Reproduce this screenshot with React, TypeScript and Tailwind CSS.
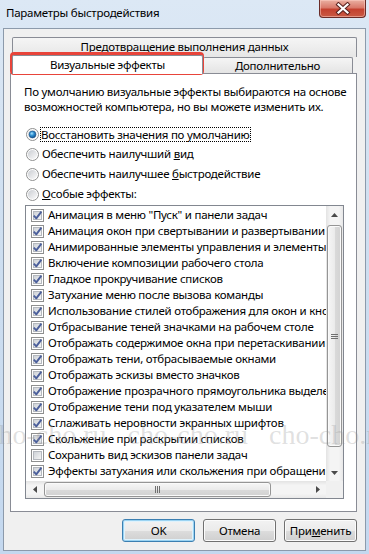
import React from "react";

const items: [string, boolean][] = [
  ['Анимация в меню "Пуск" и панели задач', true],
  ["Анимация окон при свертывании и развертывании", true],
  ["Анимированные элементы управления и элементы внутри окна", true],
  ["Включение композиции рабочего стола", true],
  ["Гладкое прокручивание списков", true],
  ["Затухание меню после вызова команды", true],
  ["Использование стилей отображения для окон и кнопок", true],
  ["Отбрасывание теней значками на рабочем столе", true],
  ["Отображать содержимое окна при перетаскивании", true],
  ["Отображать тени, отбрасываемые окнами", true],
  ["Отображать эскизы вместо значков", true],
  ["Отображение прозрачного прямоугольника выделения", true],
  ["Отображение тени под указателем мыши", true],
  ["Сглаживать неровности экранных шрифтов", true],
  ["Скольжение при раскрытии списков", true],
  ["Сохранить вид эскизов панели задач", false],
  ["Эффекты затухания или скольжения при обращении к меню", true],
];

function Defs() {
  return (
    <svg width="0" height="0" className="absolute">
      <defs>
        <linearGradient id="cbIn" x1="0" y1="0" x2="1" y2="1">
          <stop offset="0" stopColor="#cbcfd5" />
          <stop offset="1" stopColor="#f7f7f7" />
        </linearGradient>
        <linearGradient id="rdIn" x1="0" y1="0" x2="1" y2="1">
          <stop offset="0" stopColor="#c9ccd1" />
          <stop offset="1" stopColor="#fbfbfb" />
        </linearGradient>
        <radialGradient id="rdDot" cx="0.4" cy="0.35" r="0.7">
          <stop offset="0" stopColor="#a8e4ff" />
          <stop offset="0.45" stopColor="#2f8fd0" />
          <stop offset="1" stopColor="#0c4a86" />
        </radialGradient>
      </defs>
    </svg>
  );
}

function CheckBox({ checked }: { checked: boolean }) {
  return (
    <svg width="13" height="13" viewBox="0 0 13 13" className="shrink-0">
      <rect x="0.5" y="0.5" width="12" height="12" fill="#ffffff" stroke="#8e8f8f" />
      <rect x="2.5" y="2.5" width="8" height="8" fill="url(#cbIn)" stroke="#b4b8be" />
      {checked && (
        <path
          d="M2.8 6.6 L5.3 9.3 L10.4 2.6"
          fill="none"
          stroke="#4b5f9b"
          strokeWidth="1.9"
          strokeLinejoin="round"
        />
      )}
    </svg>
  );
}

function Radio({ checked }: { checked: boolean }) {
  return (
    <svg width="13" height="13" viewBox="0 0 13 13" className="shrink-0">
      <circle cx="6.5" cy="6.5" r="6" fill="#ffffff" stroke="#8e8f8f" />
      <circle cx="6.5" cy="6.5" r="4.6" fill="url(#rdIn)" />
      {checked && <circle cx="6.5" cy="6.5" r="3.4" fill="url(#rdDot)" stroke="#1a5289" strokeWidth="0.6" />}
    </svg>
  );
}

function Tri({ dir }: { dir: "up" | "down" | "left" | "right" }) {
  const p =
    dir === "up"
      ? "M0 4 L3.5 0 L7 4 Z"
      : dir === "down"
      ? "M0 0 L7 0 L3.5 4 Z"
      : dir === "left"
      ? "M4 0 L4 7 L0 3.5 Z"
      : "M0 0 L4 3.5 L0 7 Z";
  const w = dir === "up" || dir === "down" ? 7 : 4;
  const h = dir === "up" || dir === "down" ? 4 : 7;
  return (
    <svg width={w} height={h} viewBox={`0 0 ${w} ${h}`}>
      <path d={p} fill="#4a4a4a" />
    </svg>
  );
}

function Btn({ label, def }: { label: React.ReactNode; def?: boolean }) {
  return (
    <div
      className={
        "flex h-[23px] w-[73px] items-center justify-center rounded-[3px] border leading-[14px] " +
        (def
          ? "border-[#3c7fb1] bg-[linear-gradient(to_bottom,#f2f2f2_0%,#ebebeb_50%,#dddddd_51%,#cfcfcf_100%)] shadow-[inset_0_0_0_1px_#9ad3f2,inset_0_0_0_2px_#dff2fc]"
          : "border-[#707070] bg-[linear-gradient(to_bottom,#f2f2f2_0%,#ebebeb_50%,#dddddd_51%,#cfcfcf_100%)] shadow-[inset_0_0_0_1px_#fbfbfb]")
      }
    >
      {label}
    </div>
  );
}

export default function App() {
  return (
    <div className="relative h-[554px] w-[369px] overflow-hidden bg-[linear-gradient(to_bottom,#dce8f5,#cfdff0_40%,#c4d8ef)] font-['Noto_Sans',sans-serif] text-[11.5px] tracking-[-0.25px] text-black">
      <Defs />
      {/* title bar */}
      <div className="flex h-[28px] items-start justify-between">
        <div className="pl-[6px] pt-[5px] leading-[16px]">Параметры быстродействия</div>
        <div className="mr-[3px] flex h-[18px] w-[47px] items-center justify-center rounded-b-[4px] border border-t-0 border-[#6a2b27] bg-[linear-gradient(to_bottom,#eab0a2_0%,#d9796a_45%,#c4412f_55%,#c95a44_100%)] shadow-[inset_0_0_0_1px_rgba(255,210,200,0.5)]">
          <svg width="16" height="13" viewBox="0 0 16 13">
            <path d="M3.5 2.5 L12.5 10.5 M12.5 2.5 L3.5 10.5" stroke="#5a2320" strokeWidth="4.2" strokeLinecap="square" />
            <path d="M3.5 2.5 L12.5 10.5 M12.5 2.5 L3.5 10.5" stroke="#ffffff" strokeWidth="2.2" strokeLinecap="square" />
          </svg>
        </div>
      </div>

      {/* client area */}
      <div className="mx-[3px] flex h-[523px] flex-col border border-[#8c9aab] bg-[#f0f0f0] pl-[6px] pr-[8px]">
        {/* tabs */}
        <div className="mt-[8px] ml-[2px] flex h-[20px] w-[345px] items-start justify-center rounded-t-[2px] border border-b-0 border-[#898c95] bg-[linear-gradient(to_bottom,#f5f5f5,#e6e6e6)] pt-[2px] leading-[14px]">
          Предотвращение выполнения данных
        </div>
        <div className="ml-[2px] flex h-[16px] items-start">
          <div className="relative z-10 -mt-[2px] flex h-[19px] w-[191px] items-center justify-center rounded-t-[2px] border border-b-0 border-[#898c95] bg-white leading-[14px]">
            Визуальные эффекты
          </div>
          <div className="flex h-[16px] w-[150px] items-center justify-center rounded-t-[2px] border border-b-0 border-l-0 border-[#898c95] bg-[linear-gradient(to_bottom,#f5f5f5,#e4e4e4)] pt-[1px] leading-[14px]">
            Дополнительно
          </div>
        </div>

        {/* panel */}
        <div className="flex h-[439px] w-[347px] flex-col border border-[#898c95] bg-white">
          <div className="whitespace-nowrap pl-[13px] pt-[10px] leading-[15px]">
            По умолчанию визуальные эффекты выбираются на основе
            <br />
            возможностей компьютера, но вы можете изменить их.
          </div>
          <div className="mt-[10px] flex flex-col pl-[15px]">
            <div className="flex h-[20px] items-center gap-[1px]">
              <Radio checked />
              <span className="border border-dotted border-black px-0 leading-[13px]">
                Восстановить значения по умолчанию
              </span>
            </div>
            <div className="flex h-[20px] items-center gap-[2px]">
              <Radio checked={false} />
              <span className="pl-[1px] leading-[14px]">
                Обеспечить наилучший <u>в</u>ид
              </span>
            </div>
            <div className="flex h-[20px] items-center gap-[2px]">
              <Radio checked={false} />
              <span className="pl-[1px] leading-[14px]">
                Обеспечить наилучшее <u>б</u>ыстродействие
              </span>
            </div>
            <div className="flex h-[20px] items-center gap-[2px]">
              <Radio checked={false} />
              <span className="pl-[1px] leading-[14px]">
                <u>О</u>собые эффекты:
              </span>
            </div>
          </div>

          {/* list box */}
          <div className="ml-[14px] mt-[1px] grid h-[294px] w-[319px] grid-cols-[300px_17px] grid-rows-[275px_17px] border border-[#828790]">
            <div className="overflow-hidden pt-[1px]">
              {items.map(([t, c], i) => (
                <div key={i} className="flex h-[16px] items-center gap-[4px] whitespace-nowrap pl-[5px] leading-[14px]">
                  <CheckBox checked={c} />
                  <span>{t}</span>
                </div>
              ))}
            </div>
            {/* vertical scrollbar */}
            <div className="flex flex-col bg-[linear-gradient(to_right,#e3e3e3,#f4f4f4_25%,#f4f4f4_75%,#e8e8e8)]">
              <div className="flex h-[17px] items-center justify-center">
                <Tri dir="up" />
              </div>
              <div className="mx-[1px] mt-[2px] flex h-[222px] items-center justify-center rounded-[3px] border border-[#959595] bg-[linear-gradient(to_right,#f6f6f6,#ebebeb_50%,#dadada_51%,#d2d2d2)] shadow-[inset_0_0_0_1px_#fafafa]">
                <svg width="7" height="7" viewBox="0 0 7 7">
                  <path d="M0 1.5 H7 M0 3.5 H7 M0 5.5 H7" stroke="#6f6f6f" strokeWidth="1" />
                </svg>
              </div>
              <div className="flex-1" />
              <div className="flex h-[17px] items-center justify-center">
                <Tri dir="down" />
              </div>
            </div>
            {/* horizontal scrollbar */}
            <div className="flex bg-[linear-gradient(to_bottom,#e3e3e3,#f4f4f4_25%,#f4f4f4_75%,#e8e8e8)]">
              <div className="flex w-[17px] items-center justify-center">
                <Tri dir="left" />
              </div>
              <div className="my-[1px] ml-[1px] flex w-[227px] items-center justify-center rounded-[3px] border border-[#959595] bg-[linear-gradient(to_bottom,#f6f6f6,#ebebeb_50%,#dadada_51%,#d2d2d2)] shadow-[inset_0_0_0_1px_#fafafa]">
                <svg width="7" height="7" viewBox="0 0 7 7">
                  <path d="M1.5 0 V7 M3.5 0 V7 M5.5 0 V7" stroke="#6f6f6f" strokeWidth="1" />
                </svg>
              </div>
              <div className="flex-1" />
              <div className="flex w-[17px] items-center justify-center">
                <Tri dir="right" />
              </div>
            </div>
            <div className="bg-[#f0f0f0]" />
          </div>
        </div>

        {/* buttons */}
        <div className="mt-[7px] flex justify-end gap-[8px]">
          <Btn label="OK" def />
          <Btn label="Отмена" />
          <Btn
            label={
              <span>
                При<u>м</u>енить
              </span>
            }
          />
        </div>
      </div>

      {/* red highlight annotation */}
      <div className="pointer-events-none absolute left-[10px] top-[52px] h-[23px] w-[194px] rounded-[4px] border-[3px] border-[#e8443a]" />

      {/* watermark */}
      <div className="pointer-events-none absolute left-[-14px] top-[420px] whitespace-nowrap font-['Liberation_Serif',serif] text-[28px] leading-[30px] tracking-normal text-[rgba(150,150,150,0.3)]">
        cho-cho.ru&nbsp;&nbsp;&nbsp;cho-cho.ru&nbsp;&nbsp;&nbsp;cho-cho.ru
      </div>
    </div>
  );
}
